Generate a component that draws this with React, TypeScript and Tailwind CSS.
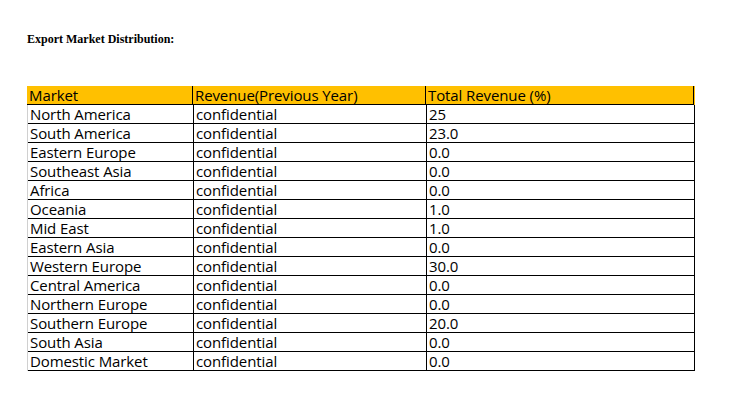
const rows: [string, string][] = [
  ["North America", "25"],
  ["South America", "23.0"],
  ["Eastern Europe", "0.0"],
  ["Southeast Asia", "0.0"],
  ["Africa", "0.0"],
  ["Oceania", "1.0"],
  ["Mid East", "1.0"],
  ["Eastern Asia", "0.0"],
  ["Western Europe", "30.0"],
  ["Central America", "0.0"],
  ["Northern Europe", "0.0"],
  ["Southern Europe", "20.0"],
  ["South Asia", "0.0"],
  ["Domestic Market", "0.0"],
]

function Row({ cells, header }: { cells: string[]; header?: boolean }) {
  return (
    <div
      className={
        "grid grid-cols-[165px_233px_269px] " +
        (header ? "bg-[#ffc000]" : "border-l border-l-[#d0d0d0]")
      }
    >
      {cells.map((c, i) => (
        <div
          key={i}
          className={
            "h-[19px] border-b border-black pl-[2px] pt-[3px] leading-[13px] whitespace-nowrap " +
            (i > 0 ? "border-l border-l-black " : "") +
            (i === 2 ? "border-r border-r-black" : "")
          }
        >
          {c}
        </div>
      ))}
    </div>
  )
}

export default function App() {
  return (
    <div className="w-[750px] h-[400px] bg-white pt-[32px] pl-[27px]">
      <h1 className="font-['Liberation_Serif',serif] font-bold text-[12px] leading-[14px] text-black">
        Export Market Distribution:
      </h1>

      <div className="mt-[40px] font-['Open_Sans',sans-serif] font-medium text-[15px] tracking-[-0.1px] text-black w-[668px]">
        <Row header cells={["Market", "Revenue(Previous Year)", "Total Revenue (%)"]} />
        {rows.map(([m, v]) => (
          <Row key={m} cells={[m, "confidential", v]} />
        ))}
      </div>
    </div>
  )
}
